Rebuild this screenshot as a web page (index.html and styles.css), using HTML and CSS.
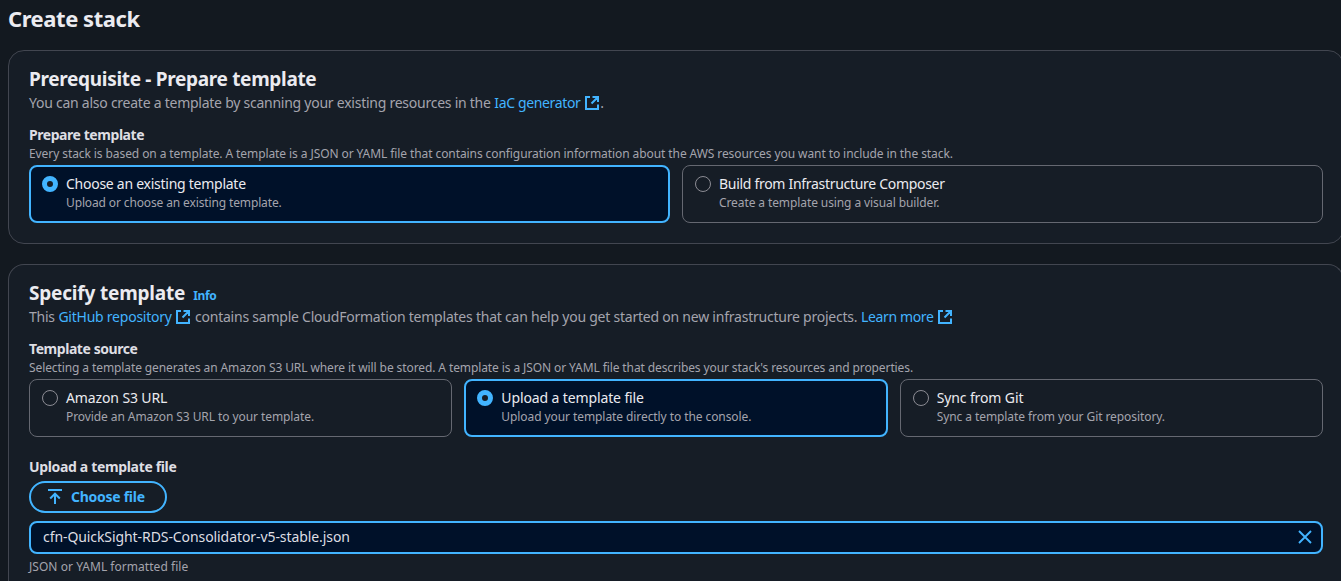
FILE: index.html
```html
<!DOCTYPE html>
<html lang="en">
<head>
<meta charset="utf-8">
<title>Create stack</title>
<link rel="stylesheet" href="styles.css">
</head>
<body>
<svg class="defs" width="0" height="0" aria-hidden="true">
  <symbol id="external" viewBox="0 0 16 16"><path d="M6 2H2v12h12V9.500M8.500 2H14v5M13.500 2.500 7.500 8.500" fill="none" stroke="currentColor" stroke-width="2"/></symbol>
</svg>
<main class="page">
  <h1 class="page-title"><span class="t-h1">Create stack</span></h1>

  <section class="card card-prepare">
    <h2 class="card-title"><span class="t-prereq">Prerequisite - Prepare template</span></h2>
    <p class="card-desc"><span class="t-scan">You can also create a template by scanning your existing resources in the</span> <a class="t-iac">IaC generator</a> <svg class="ext"><use href="#external"/></svg>.</p>
    <div class="label"><span class="t-prepare">Prepare template</span></div>
    <div class="hint"><span class="t-every">Every stack is based on a template. A template is a JSON or YAML file that contains configuration information about the AWS resources you want to include in the stack.</span></div>
    <div class="tiles two">
      <div class="tile selected"><i class="radio"></i><div><div class="tile-title"><span class="t-existing">Choose an existing template</span></div><div class="tile-desc"><span class="t-existing-d">Upload or choose an existing template.</span></div></div></div>
      <div class="tile"><i class="radio"></i><div><div class="tile-title"><span class="t-build">Build from Infrastructure Composer</span></div><div class="tile-desc"><span class="t-build-d">Create a template using a visual builder.</span></div></div></div>
    </div>
  </section>

  <section class="card card-specify">
    <h2 class="card-title"><span class="t-specify">Specify template</span><a class="info">Info</a></h2>
    <p class="card-desc"><span class="t-this">This</span> <a class="t-github">GitHub repository</a> <svg class="ext"><use href="#external"/></svg> <span class="t-contains">contains sample CloudFormation templates that can help you get started on new infrastructure projects.</span> <a class="t-learn">Learn more</a> <svg class="ext"><use href="#external"/></svg></p>
    <div class="label"><span class="t-source">Template source</span></div>
    <div class="hint"><span class="t-selecting">Selecting a template generates an Amazon S3 URL where it will be stored. A template is a JSON or YAML file that describes your stack's resources and properties.</span></div>
    <div class="tiles three">
      <div class="tile"><i class="radio"></i><div><div class="tile-title"><span class="t-s3">Amazon S3 URL</span></div><div class="tile-desc"><span class="t-s3-d">Provide an Amazon S3 URL to your template.</span></div></div></div>
      <div class="tile selected"><i class="radio"></i><div><div class="tile-title"><span class="t-upload">Upload a template file</span></div><div class="tile-desc"><span class="t-upload-d">Upload your template directly to the console.</span></div></div></div>
      <div class="tile"><i class="radio"></i><div><div class="tile-title"><span class="t-git">Sync from Git</span></div><div class="tile-desc"><span class="t-git-d">Sync a template from your Git repository.</span></div></div></div>
    </div>
    <div class="label upload-label"><span class="t-upload-label">Upload a template file</span></div>
    <button class="choose"><svg viewBox="0 0 16 16"><path d="M1 1h14M8 15V5M3.200 9.500 8 4.700l4.800 4.800" fill="none" stroke="currentColor" stroke-width="2"/></svg><span class="t-choose">Choose file</span></button>
    <div class="file"><span class="t-file">cfn-QuickSight-RDS-Consolidator-v5-stable.json</span><svg viewBox="0 0 16 16"><path d="m2 2 12 12M14 2 2 14" fill="none" stroke="currentColor" stroke-width="1.900"/></svg></div>
    <div class="hint constraint"><span class="t-format">JSON or YAML formatted file</span></div>
  </section>
</main>
</body>
</html>
```
FILE: styles.css
```css
* { box-sizing: border-box; }
html, body { margin: 0; height: 581px; overflow: hidden; background: #131920; }
body { font-family: "Noto Sans", sans-serif; font-size: 14px; color: #dedee3; }
h1, h2, p { margin: 0; }
.defs { display: block; height: 0; }
.page { padding-left: 8px; width: 1344px; height: 581px; overflow: hidden; white-space: nowrap; }
.page-title { height: 50px; line-height: 36px; font-size: 22px; font-weight: 700; color: #ebebf0; }
.card { width: 1336px; background: #161d26; border: 1px solid #424650; border-radius: 16px; padding: 0 20px; }
.card-prepare { height: 194px; margin-bottom: 20px; }
.card-specify { height: 317px; border-bottom: 0; border-radius: 16px 16px 0 0; }
.card-title { margin-top: 16px; height: 24px; line-height: 24px; font-size: 19px; font-weight: 700; color: #ebebf0; }
.card-desc { height: 24px; line-height: 24px; color: #a4a4ad; }
a { color: #42b4ff; }
.info { font-size: 12px; margin-left: 8px; letter-spacing: -0.35px; }
.ext { width: 16px; height: 16px; vertical-align: -3px; color: #42b4ff; }
.label { margin-top: 10px; height: 20px; line-height: 20px; font-weight: 700; }
.hint { height: 16px; line-height: 16px; margin-top: 1px; font-size: 12px; color: #a4a4ad; }
.tiles { display: grid; gap: 12px; margin-top: 3px; }
.two { grid-template-columns: repeat(2, 1fr); }
.three { grid-template-columns: repeat(3, 1fr); }
.tile { display: flex; gap: 8px; height: 58px; padding: 8px 12px; border: 1px solid #656871; border-radius: 8px; }
.tile.selected { border: 2px solid #42b4ff; padding: 7px 11px; background: #001129; }
.radio { flex: none; width: 16px; height: 16px; margin-top: 2px; border: 1px solid #8c8c94; border-radius: 50%; }
.selected .radio { border: 5px solid #42b4ff; background: #161d26; }
.tile-title { height: 20px; line-height: 20px; color: #ebebf0; }
.tile-desc { height: 18px; line-height: 18px; font-size: 12px; color: #a4a4ad; }
.upload-label { margin-top: 20px; }
.choose { display: flex; align-items: center; gap: 8px; height: 32px; width: 138px; margin-top: 4px; padding: 0 0 0 16px; border: 2px solid #42b4ff; border-radius: 16px; background: transparent; color: #42b4ff; font: 700 14px "Noto Sans", sans-serif; }
.choose svg { width: 16px; height: 16px; flex: none; }
.choose span { padding-bottom: 2px; }
.file { display: flex; align-items: center; justify-content: space-between; height: 33px; margin-top: 8px; padding: 0 8px 1px 12px; border: 2px solid #42b4ff; border-radius: 8px; background: #001129; }
.file span { padding-bottom: 1px; }
.file svg { width: 16px; height: 16px; color: #42b4ff; }
.constraint { margin-top: 5px; }

/* Tracking per text run */
.t-h1 { letter-spacing: -0.45px; }
.t-prereq { letter-spacing: -0.32px; }
.t-scan, .t-this { letter-spacing: -0.25px; }
.t-iac, .t-learn { letter-spacing: -0.35px; }
.t-prepare, .t-source { letter-spacing: -0.44px; }
.t-every { letter-spacing: -0.085px; }
.t-existing { letter-spacing: -0.26px; }
.t-existing-d { letter-spacing: -0.13px; }
.t-build { letter-spacing: -0.3px; }
.t-build-d, .t-selecting { letter-spacing: -0.1px; }
.t-specify { letter-spacing: -0.19px; }
.t-github { letter-spacing: -0.24px; }
.t-contains { letter-spacing: -0.228px; }
.t-s3, .t-upload, .t-git { letter-spacing: -0.12px; }
.t-s3-d, .t-upload-d, .t-git-d, .t-file { letter-spacing: -0.08px; }
.t-upload-label { letter-spacing: -0.34px; }
.t-choose { letter-spacing: -0.27px; }
.t-format { letter-spacing: 0.04px; }
```
